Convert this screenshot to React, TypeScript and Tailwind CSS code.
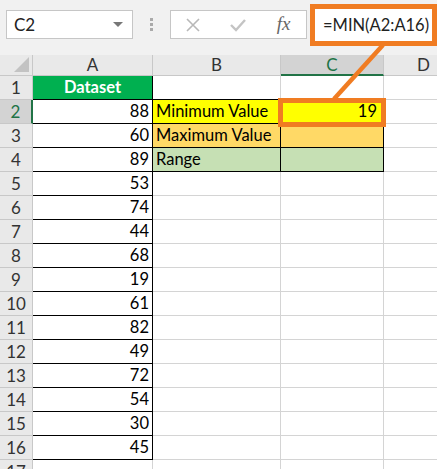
import React from "react";

const data = [88, 60, 89, 53, 74, 44, 68, 19, 61, 82, 49, 72, 54, 30, 45];

const font = { fontFamily: "Lato, 'Open Sans', sans-serif" };

const ColHeader: React.FC<{ label: string; w: string; active?: boolean }> = ({ label, w, active }) => (
  <div
    className={`${w} shrink-0 h-full flex items-center justify-center text-[17px] border-r border-[#c8c8c8] ${
      active ? "bg-[#d3d3d3] text-[#217346] border-b-2 border-b-[#217346]" : "text-[#333] border-b border-b-[#c8c8c8]"
    }`}
  >
    {label}
  </div>
);

const App: React.FC = () => {
  const rows = Array.from({ length: 17 }, (_, i) => i + 1);

  return (
    <div className="relative w-[437px] h-[469px] overflow-hidden bg-white text-black" style={font}>
      {/* formula bar */}
      <div className="h-[55px] bg-[#f1f1f1] flex items-start pt-[10px] pl-[6px]">
        <div className="w-[127px] shrink-0 h-[29px] bg-white border border-[#c6c6c6] flex items-center justify-between pl-[7px] pr-[9px]">
          <span className="text-[17px] text-[#222]">C2</span>
          <span className="w-0 h-0 border-l-[5px] border-r-[5px] border-t-[5px] border-l-transparent border-r-transparent border-t-[#777]" />
        </div>
        <div className="w-[37px] shrink-0 h-[29px] flex flex-col items-center justify-center gap-[2px]">
          <span className="w-[3px] h-[3px] bg-[#aaa]" />
          <span className="w-[3px] h-[3px] bg-[#aaa]" />
          <span className="w-[3px] h-[3px] bg-[#aaa]" />
        </div>
        <div className="w-[137px] shrink-0 h-[29px] bg-white border border-[#c6c6c6] flex items-center">
          <div className="w-[44px] flex justify-center">
            <svg width="16" height="16" viewBox="0 0 16 16">
              <path d="M2 2 L14 14 M14 2 L2 14" stroke="#b8b8b8" strokeWidth="1.6" />
            </svg>
          </div>
          <div className="w-[46px] flex justify-center">
            <svg width="18" height="16" viewBox="0 0 18 16">
              <path d="M2 8 L7 13 L16 3" stroke="#c4c4c4" strokeWidth="2.4" fill="none" />
            </svg>
          </div>
          <div className="flex-1 flex justify-center">
            <span className="text-[19px] italic text-[#666]" style={{ fontFamily: "'Liberation Serif', serif" }}>
              fx
            </span>
          </div>
        </div>
        <div className="ml-[3px] -mt-[6px] w-[127px] shrink-0 h-[42px] bg-white border-[5px] border-[#f07c22] flex items-center pl-[8px]">
          <span className="text-[16.5px] text-[#222] whitespace-nowrap">=MIN(A2:A16)</span>
        </div>
      </div>

      {/* column headers */}
      <div className="h-[21px] flex bg-[#e9e9e9]">
        <div className="w-[33px] shrink-0 h-full border-r border-b border-[#c8c8c8] flex items-end justify-end pr-[3px] pb-[3px]">
          <svg width="15" height="15" viewBox="0 0 15 15">
            <polygon points="15,0 15,15 0,15" fill="#c3c3c3" />
          </svg>
        </div>
        <ColHeader label="A" w="w-[120px]" />
        <ColHeader label="B" w="w-[128px]" />
        <ColHeader label="C" w="w-[103px]" active />
        <ColHeader label="D" w="w-[80px]" />
      </div>

      {/* grid */}
      {rows.map((r) => {
        const val = r >= 2 && r <= 16 ? data[r - 2] : null;
        const aBlack = r <= 16;
        const inBox = r >= 2 && r <= 4;
        const bTop = r === 1;
        const bText = r === 2 ? "Minimum Value" : r === 3 ? "Maximum Value" : r === 4 ? "Range" : "";
        const fill = r === 2 ? "bg-[#ffff00]" : r === 3 ? "bg-[#ffd966]" : r === 4 ? "bg-[#c6e0b4]" : "bg-white";
        return (
          <div key={r} className="h-[24px] flex">
            <div
              className={`w-[33px] shrink-0 h-full flex items-center justify-center text-[17px] border-b border-[#c8c8c8] ${
                r === 2
                  ? "bg-[#d3d3d3] text-[#217346] border-r-2 border-r-[#217346]"
                  : "bg-[#e9e9e9] text-[#333] border-r border-r-[#c8c8c8]"
              }`}
            >
              {r}
            </div>
            <div
              className={`w-[120px] shrink-0 h-full flex items-center text-[16.5px] border-r border-b ${
                aBlack ? "border-black" : "border-[#d4d4d4]"
              } ${r === 1 ? "bg-[#00b050] justify-center text-white font-bold" : "justify-end pr-[3px]"}`}
            >
              {r === 1 ? "Dataset" : val}
            </div>
            <div
              className={`w-[128px] shrink-0 h-full flex items-center pl-[3px] text-[16.5px] border-r border-b ${fill} ${
                inBox ? "border-black" : bTop ? "border-r-[#d4d4d4] border-b-black" : "border-[#d4d4d4]"
              }`}
            >
              {bText}
            </div>
            <div
              className={`w-[103px] shrink-0 h-full flex items-center justify-end pr-[6px] text-[16.5px] border-r border-b ${fill} ${
                inBox ? "border-black" : bTop ? "border-r-[#d4d4d4] border-b-black" : "border-[#d4d4d4]"
              }`}
            >
              {r === 2 ? "19" : ""}
            </div>
            <div className="w-[80px] shrink-0 h-full border-r border-b border-[#d4d4d4]" />
          </div>
        );
      })}

      {/* callout */}
      <div className="absolute left-[278px] top-[98px] w-[108px] h-[29px] border-[5px] border-[#f07c22] pointer-events-none" />
      <svg className="absolute left-0 top-0 pointer-events-none" width="437" height="469">
        <line x1="383" y1="45" x2="334" y2="99" stroke="#f07c22" strokeWidth="4.5" />
      </svg>
    </div>
  );
};

export default App;
